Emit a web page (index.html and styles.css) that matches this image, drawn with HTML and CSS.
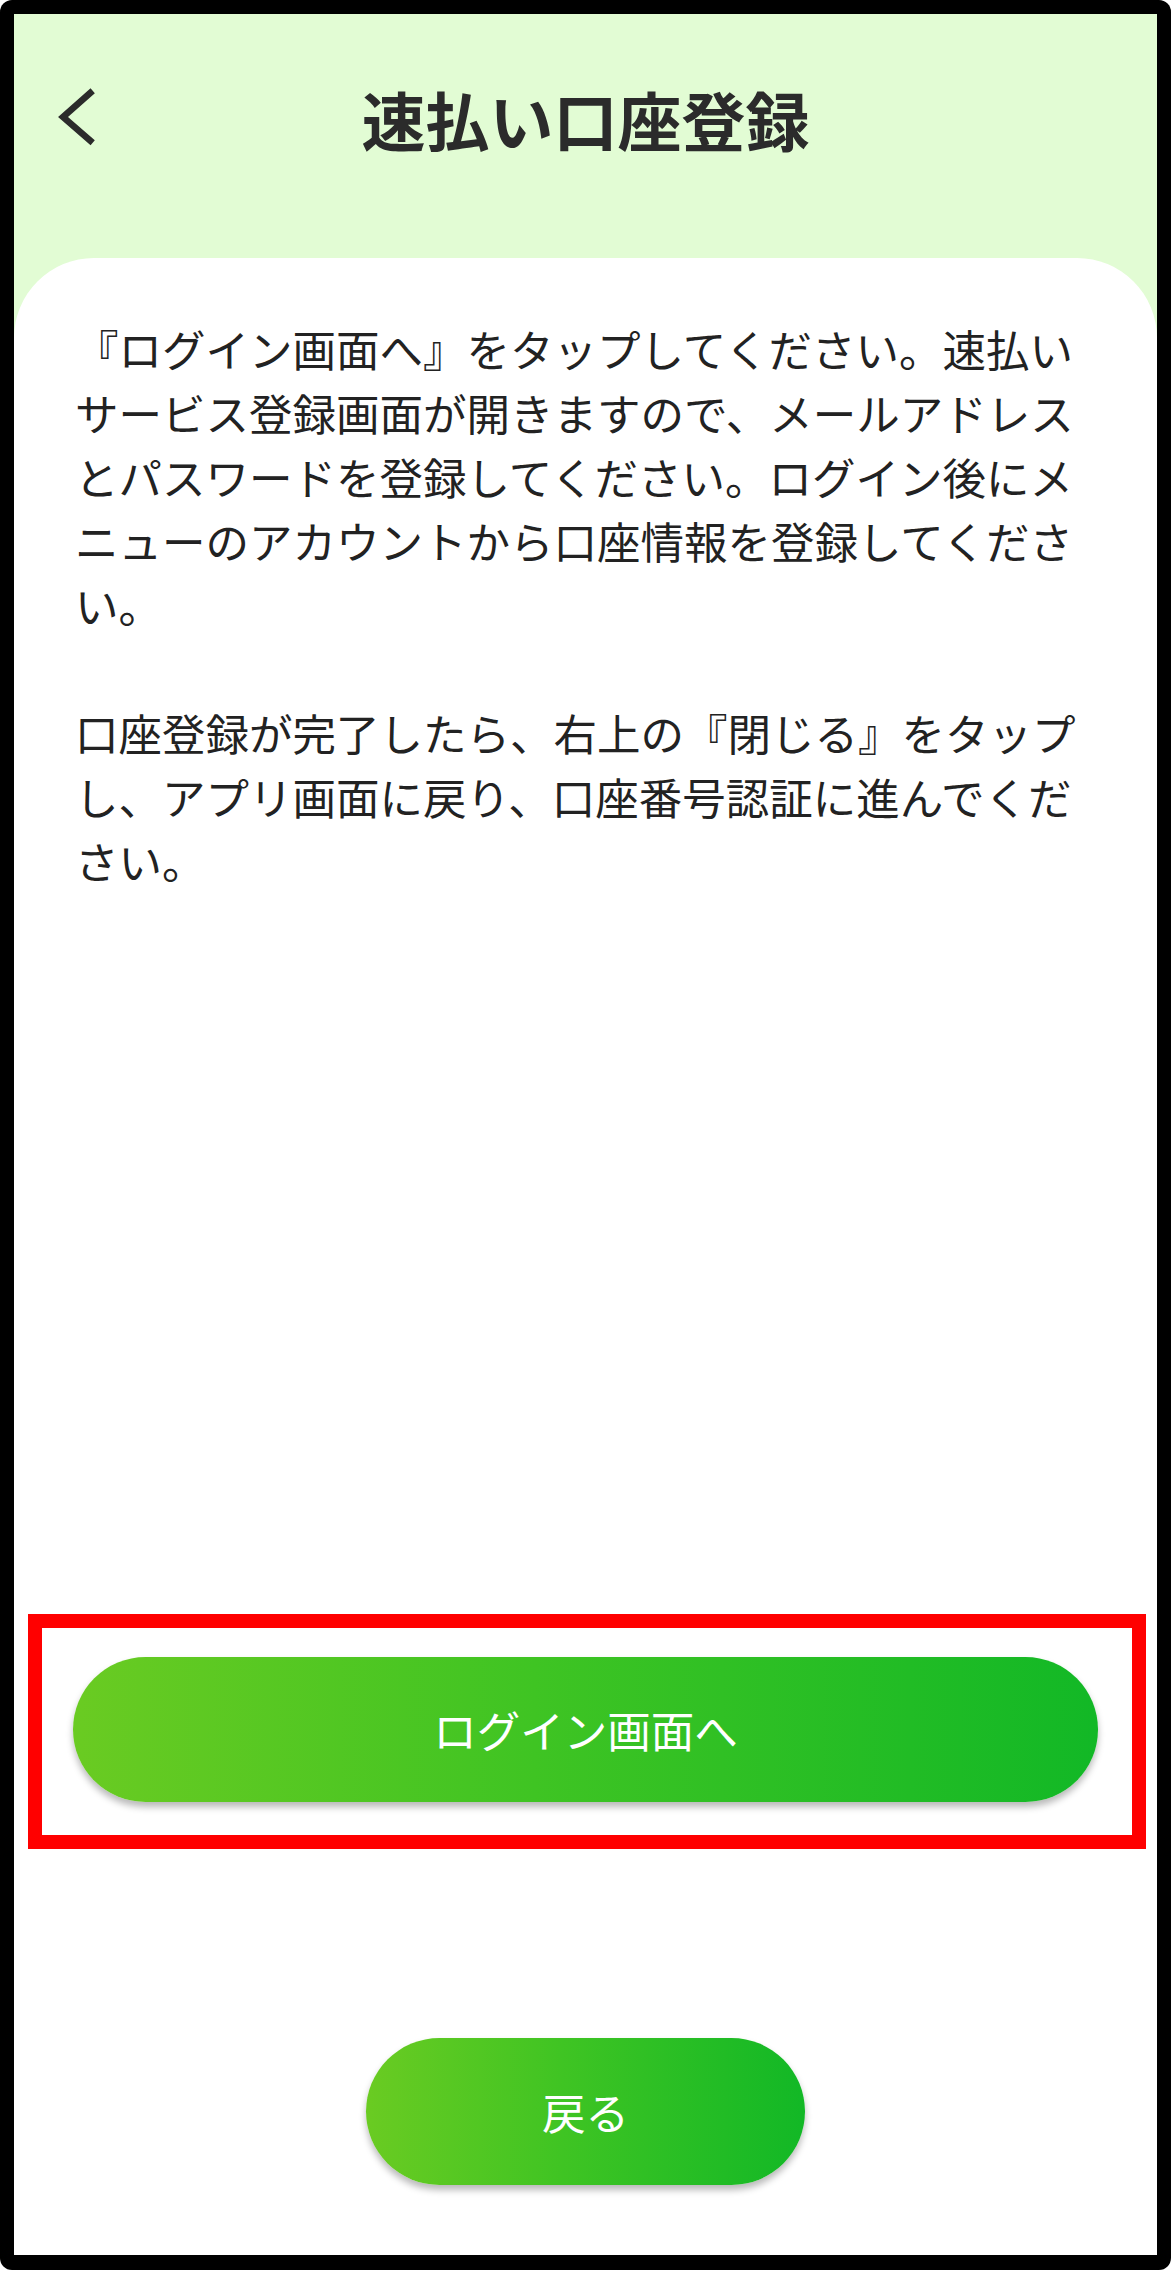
FILE: index.html
```html
<!DOCTYPE html>
<html lang="ja">
<head>
<meta charset="utf-8">
<title>速払い口座登録</title>
<link rel="stylesheet" href="styles.css">
</head>
<body>
<div class="frame">
  <div class="screen">
    <header class="header">
      <div class="back">
        <svg class="chev" width="40" height="60" viewBox="0 0 40 60" aria-hidden="true">
          <path d="M34.7 2.7 L5 29 L34.7 54.7" fill="none" stroke="#2b2b2b" stroke-width="6.5" stroke-linejoin="miter"/>
        </svg>
      </div>
      <h1 class="title">速払い口座登録</h1>
      <div class="side"></div>
    </header>
    <main class="card">
      <div class="body-text">
        <p>『ログイン画面へ』をタップしてください。速払いサービス登録画面が開きますので、メールアドレスとパスワードを登録してください。ログイン後にメニューのアカウントから口座情報を登録してください。</p>
        <p class="para2">口座登録が完了したら、右上の『閉じる』をタップし、アプリ画面に戻り、口座番号認証に進んでください。</p>
      </div>
      <div class="highlight">
        <button class="btn btn-login" type="button">ログイン画面へ</button>
      </div>
      <button class="btn btn-back" type="button">戻る</button>
    </main>
  </div>
</div>
</body>
</html>
```
FILE: styles.css
```css
html, body {
  margin: 0;
  padding: 0;
  background: #ffffff;
}
body {
  font-family: "Noto Sans CJK JP", "Noto Sans", sans-serif;
}
.frame {
  width: 1171px;
  height: 2270px;
  box-sizing: border-box;
  background: #000000;
  border-radius: 12px;
  padding: 14px 14px 15px 14px;
}
.screen {
  height: 100%;
  background: #e2fcd4;
  display: flex;
  flex-direction: column;
}
.header {
  height: 208px;
  margin-bottom: 36px;
  display: grid;
  grid-template-columns: 1fr auto 1fr;
  align-items: center;
  flex: none;
}
.back {
  padding-left: 44px;
  display: flex;
  align-items: center;
}
.chev {
  display: block;
}
.title {
  margin: 0;
  font-size: 64px;
  font-weight: 700;
  color: #2b2b2b;
  line-height: 1;
  letter-spacing: 0;
}
.card {
  flex: 1;
  background: #ffffff;
  border-radius: 80px 80px 0 0;
  display: flex;
  flex-direction: column;
  align-items: center;
  padding: 59px 0 70px 0;
}
.body-text {
  align-self: stretch;
  padding: 0 61px;
  font-size: 43.5px;
  line-height: 64px;
  color: #222222;
}
.body-text p {
  margin: 0;
}
.body-text .para2 {
  margin-top: 64px;
}
.highlight {
  margin-top: auto;
  width: 1118px;
  box-sizing: border-box;
  border: 14px solid #ff0000;
  padding: 29px 34px 33px 31px;
  margin-left: 3px;
}
.btn {
  display: flex;
  align-items: center;
  justify-content: center;
  border: none;
  color: #ffffff;
  font-family: "Noto Sans CJK JP", "Noto Sans", sans-serif;
  font-size: 43.5px;
  font-weight: 400;
  background: linear-gradient(90deg, #6acb22 0%, #3fc423 45%, #12b826 100%);
  box-shadow: 0 5px 7px rgba(0, 0, 0, 0.28);
  padding: 0;
  cursor: pointer;
}
.btn-login {
  width: 100%;
  height: 145px;
  border-radius: 73px;
}
.btn-back {
  margin-top: 189px;
  width: 439px;
  height: 147px;
  border-radius: 74px;
}
```
